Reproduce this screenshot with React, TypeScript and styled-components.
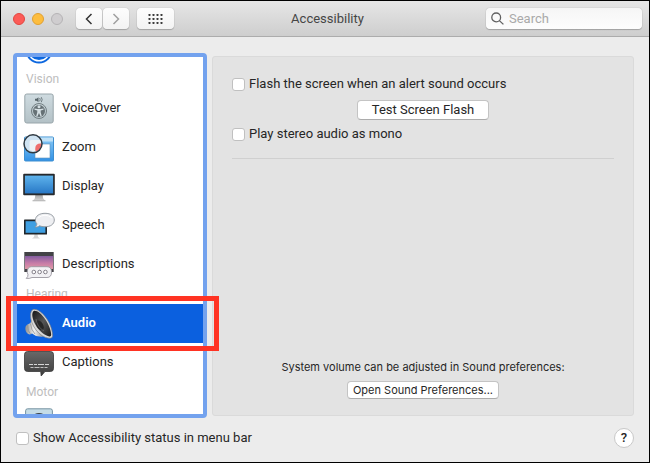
import React from "react";
import styled, { createGlobalStyle } from "styled-components";

const GlobalStyle = createGlobalStyle`
  *, *::before, *::after { box-sizing: border-box; }
  body { margin: 0; background: #000; }
  body, button, input { font-family: Roboto, "Liberation Sans", sans-serif; font-size: 13px; color: #262626; }
`;

const smallFont = 'Inter, "Liberation Sans", sans-serif';

const Window = styled.main`
  display: flex;
  flex-direction: column;
  height: 100vh;
  border: 1px solid #000;
  background: #ececec;
`;

const Toolbar = styled.header`
  display: grid;
  grid-template-columns: 1fr auto 1fr;
  align-items: center;
  height: 36px;
  flex: none;
  padding: 0 7px 0 12px;
  background: linear-gradient(#e6e6e6, #cecece);
  border-bottom: 1px solid #acacac;
`;

const ToolbarStart = styled.div`
  display: flex;
  align-items: center;
  gap: 8px;
`;

const Lights = styled.div`
  display: flex;
  gap: 7px;
  margin-right: 5px;
`;

const Light = styled.button<{ $fill: string; $edge: string }>`
  width: 12px;
  height: 12px;
  padding: 0;
  border-radius: 50%;
  border: 1px solid ${(p) => p.$edge};
  background: ${(p) => p.$fill};
`;

const NavGroup = styled.nav`
  display: flex;
  gap: 1px;
`;

const ToolButton = styled.button<{ $wide?: boolean }>`
  display: flex;
  align-items: center;
  justify-content: center;
  width: ${(p) => (p.$wide ? 37 : 26)}px;
  height: 21px;
  padding: 0;
  border: 0;
  border-radius: 4px;
  background: linear-gradient(#fdfdfd, #f3f3f3);
  box-shadow: 0 0 1px rgba(0, 0, 0, 0.3), 0 1px 1px rgba(0, 0, 0, 0.2);
`;

const Title = styled.h1`
  margin: 0;
  font-size: 13px;
  font-weight: 400;
  line-height: 16px;
  color: #454545;
`;

const SearchBox = styled.label`
  display: flex;
  align-items: center;
  justify-self: end;
  gap: 5px;
  width: 156px;
  height: 21px;
  padding: 0 5px;
  border-radius: 4px;
  background: linear-gradient(#f6f6f6, #fdfdfd);
  box-shadow: 0 0 1px rgba(0, 0, 0, 0.35), 0 1px 1px rgba(0, 0, 0, 0.2);

  input {
    flex: 1;
    min-width: 0;
    padding: 0;
    border: 0;
    outline: 0;
    background: none;
    line-height: 16px;
  }
  input::placeholder { color: #a9a9a9; opacity: 1; }
`;

const Body = styled.div`
  display: flex;
  flex: 1;
  min-height: 0;
  gap: 5px;
  padding: 16px 15px 0 12px;
`;

const Sidebar = styled.aside`
  position: relative;
  display: flex;
  flex: none;
  width: 194px;
  border: 4px solid #73a2ee;
  border-radius: 4px;
  background: #fff;
`;

const ListView = styled.div`
  flex: 1;
  overflow: hidden;
`;

const List = styled.ul`
  margin: -27px 0 0;
  padding: 0;
  list-style: none;
`;

const GroupLabel = styled.li`
  height: 20px;
  padding-left: 9px;
  font-size: 12px;
  line-height: 20px;
  color: #bdbdbd;
`;

const Row = styled.button<{ $selected?: boolean }>`
  display: flex;
  align-items: center;
  gap: 7px;
  width: 100%;
  height: 39px;
  padding: 0 6px 1px;
  border: 0;
  text-align: left;
  line-height: 16px;
  font-weight: ${(p) => (p.$selected ? 600 : 400)};
  color: ${(p) => (p.$selected ? "#fff" : "#262626")};
  background: ${(p) => (p.$selected ? "#0b60df" : "transparent")};

  svg { flex: none; }
`;

const Highlight = styled.div`
  position: absolute;
  top: 239px;
  left: -11px;
  right: -16px;
  height: 55px;
  border: 5px solid #ff3323;
  pointer-events: none;
`;

const Panel = styled.section`
  display: flex;
  flex-direction: column;
  flex: 1;
  min-width: 0;
  margin: 3px 0 2px;
  padding: 19px 19px 16px;
  border: 1px solid #dadada;
  border-radius: 3px;
  background: #e3e3e3;
`;

const CheckLabel = styled.label`
  display: flex;
  align-items: center;
  gap: 4px;
  line-height: 16px;

  input {
    appearance: none;
    width: 13px;
    height: 13px;
    margin: 0;
    border: 1px solid #c0c0c0;
    border-radius: 3px;
    background: #fff;
  }
`;

const PushButton = styled.button<{ $small?: boolean }>`
  align-self: center;
  height: ${(p) => (p.$small ? 18 : 20)}px;
  padding: 0 ${(p) => (p.$small ? 5 : 14)}px;
  margin: ${(p) => (p.$small ? "6px 0 0" : "8px 0 6px")};
  border: 1px solid #c4c4c4;
  border-bottom-color: #acacac;
  border-radius: 4px;
  background: #fff;
  ${(p) => p.$small && `font-family: ${smallFont};`}
  font-size: ${(p) => (p.$small ? 11 : 13)}px;
  line-height: 16px;
`;

const Divider = styled.hr`
  width: 100%;
  margin: 16px 0 0;
  border: 0;
  border-top: 1px solid #d0d0d0;
`;

const Note = styled.p`
  margin: auto 0 0;
  text-align: center;
  font-family: ${smallFont};
  font-size: 11px;
  line-height: 16px;
`;

const Footer = styled.footer`
  display: flex;
  align-items: center;
  justify-content: space-between;
  flex: none;
  height: 44px;
  padding: 0 15px 4px;
`;

const HelpButton = styled.button`
  width: 20px;
  height: 20px;
  padding: 0;
  border: 1px solid #c8c8c8;
  border-radius: 50%;
  background: #fff;
  font-weight: 500;
  line-height: 16px;
`;

const Figure = ({ color }: { color: string }) => (
  <g fill={color}>
    <circle cx="16" cy="13.4" r="1.5" />
    <path d="M11.5 15.2 L14.6 15.8 H17.4 L20.5 15.2 V16.4 L17.7 17.2 V19 L18.8 23 L17.6 23.3 L16 19.6 L14.4 23.3 L13.2 23 L14.3 19 V17.2 L11.5 16.4 Z" />
  </g>
);

const OverviewIcon = () => (
  <svg width="32" height="32" viewBox="0 0 32 32">
    <circle cx="16" cy="17" r="13.5" fill="#0c67df" />
    <circle cx="16" cy="17" r="10.8" fill="none" stroke="#fff" strokeWidth="1.4" />
    <Figure color="#fff" />
  </svg>
);

const VoiceOverIcon = () => (
  <svg width="32" height="32" viewBox="0 0 32 32">
    <defs>
      <linearGradient id="plate" x2="0" y2="1">
        <stop stopColor="#cfdbe0" />
        <stop offset="1" stopColor="#b3c1c6" />
      </linearGradient>
    </defs>
    <rect x="1.8" y="2" width="28.4" height="29" rx="2" fill="url(#plate)" stroke="#98a5aa" />
    <path d="M12 6.7 h1.5 l2-1.5 v5 l-2-1.5 H12z" fill="#59666b" />
    <path d="M16.7 6 q1 1.7 0 3.4 M18.3 5.2 q1.7 2.5 0 5" fill="none" stroke="#59666b" strokeWidth=".8" />
    <circle cx="16" cy="19" r="7.5" fill="none" stroke="#717d81" strokeWidth="1" />
    <circle cx="16" cy="19" r="6" fill="#667175" />
    <g transform="translate(0 1.3)"><Figure color="#d5dfe3" /></g>
  </svg>
);

const ZoomIcon = () => (
  <svg width="32" height="32" viewBox="0 0 32 32">
    <defs>
      <linearGradient id="zoomBlue" x2="0" y2="1">
        <stop stopColor="#8bcaf5" />
        <stop offset="1" stopColor="#3292e6" />
      </linearGradient>
    </defs>
    <rect x="1.5" y="6" width="29" height="24" rx="1" fill="url(#zoomBlue)" stroke="#3f8fd0" />
    <rect x="2" y="6.5" width="28" height="4" fill="#c0e1f7" />
    <rect x="12" y="13" width="15" height="14" fill="#fff" stroke="#5f8fb8" strokeWidth=".6" />
    <circle cx="10" cy="12.8" r="8.8" fill="#cfe3f2" />
    <path d="M6.5 18.5 V11 Q6.5 9 8.5 9 H18 Q18.8 15 14 19.5 Q10 21.5 6.5 18.5Z" fill="#edf2f5" />
    <path d="M18.5 12.5 Q12.5 12 12.3 17 Q11.8 20 13 20.8 Q18.5 18.5 18.5 12.5Z" fill="#ef6d6b" />
    <circle cx="10" cy="12.8" r="9" fill="none" stroke="#303a42" strokeWidth="1.5" />
  </svg>
);

const DisplayIcon = () => (
  <svg width="32" height="32" viewBox="0 0 32 32">
    <defs>
      <linearGradient id="screen" x2="0" y2="1">
        <stop stopColor="#5eb3ec" />
        <stop offset="1" stopColor="#2878c6" />
      </linearGradient>
      <linearGradient id="stand" x2="0" y2="1">
        <stop stopColor="#9b9b9b" />
        <stop offset="1" stopColor="#dadada" />
      </linearGradient>
    </defs>
    <path d="M12.5 24 H19.5 L20.2 28.5 L22.5 31 H9.5 L11.8 28.5Z" fill="url(#stand)" />
    <path d="M9.5 30.8 H22.5" stroke="#aaa" strokeWidth=".8" />
    <rect x="0.2" y="3.8" width="31.6" height="21.4" rx="1" fill="#26292c" />
    <rect x="1.9" y="5.6" width="28.2" height="17.8" fill="url(#screen)" />
  </svg>
);

const SpeechIcon = () => (
  <svg width="32" height="32" viewBox="0 0 32 32">
    <path d="M11.5 25 h3 l.5 3 2 1.6 h-8 l2-1.6z" fill="#d6d6d6" />
    <rect x="1" y="10.6" width="23" height="15" rx=".7" fill="#20262b" />
    <rect x="2.6" y="12.2" width="19.8" height="11.6" fill="#3f9fe2" />
    <path d="M22 4.3 C28 4.3 31.3 7 31.3 11 C31.3 15.2 27.5 17.8 22 17.8 C19.8 17.8 18 17.4 16.6 16.8 C15.5 17.7 14 18.2 12.2 18.1 C13.4 17 13.9 15.8 13.8 14.7 C12.8 13.6 12.4 12.4 12.4 11 C12.4 7 16.5 4.3 22 4.3Z" fill="#eeeff2" stroke="#8d949b" strokeWidth=".9" />
    <path d="M15 9 Q22 3.5 29 9" fill="none" stroke="#fff" />
  </svg>
);

const DescriptionsIcon = () => (
  <svg width="32" height="32" viewBox="0 0 32 32">
    <defs>
      <linearGradient id="sunset" x2="0" y2="1">
        <stop stopColor="#835d9f" />
        <stop offset=".55" stopColor="#c77ba7" />
        <stop offset="1" stopColor="#e09aa5" />
      </linearGradient>
    </defs>
    <rect x="1.3" y="4" width="29.4" height="20" fill="#424246" />
    <rect x="2" y="8" width="28" height="13" fill="url(#sunset)" />
    <path d="M8.5 18.7 H24 Q28.5 18.7 28.5 24 Q28.5 29.5 24 29.5 H9 Q6.5 30.8 3.2 30.4 Q5.2 29 5 26.5 Q4 25 4.3 23 Q4.8 18.7 8.5 18.7Z" fill="#f2f1f4" stroke="#9a969f" strokeWidth=".9" />
    <g fill="#fff" stroke="#77737d" strokeWidth=".9">
      <circle cx="10.8" cy="24" r="1.8" />
      <circle cx="16.6" cy="24" r="1.8" />
      <circle cx="22.4" cy="24" r="1.8" />
    </g>
  </svg>
);

const AudioIcon = () => (
  <svg width="32" height="32" viewBox="0 0 32 32">
    <defs>
      <linearGradient id="metal">
        <stop stopColor="#8f8f8f" />
        <stop offset=".5" stopColor="#f0f0f0" />
        <stop offset="1" stopColor="#929292" />
      </linearGradient>
      <linearGradient id="cone" x2="1" y2="1">
        <stop stopColor="#151515" />
        <stop offset=".5" stopColor="#565656" />
        <stop offset="1" stopColor="#1b1b1b" />
      </linearGradient>
    </defs>
    <path d="M8.5 13 L7.5 16 L4.5 17.5 Q1.8 19 2.4 22.8 Q3.2 27 6.8 27.5 L9 26.5 L13 29 L20 30Z" fill="url(#metal)" />
    <path d="M4.7 18 Q4.2 24 7.7 27.3 M7.5 16.5 Q8 23 12 27" fill="none" stroke="#888" strokeWidth=".7" />
    <path d="M10 2.5 C17 .8 29 15 29.6 28 Q29.8 31.8 26 31.2 C17 30.5 6.5 18 7.6 6.7 Q8 3.2 10 2.5Z" fill="#d8d8d8" stroke="#777" strokeWidth=".6" />
    <path d="M11.2 3.8 C17.5 3.2 27.8 17.5 28.2 27.5 Q28.2 30 25.6 29.2 C18 27.5 8.8 15.5 9.3 7 Q9.5 4.2 11.2 3.8Z" fill="url(#cone)" />
    <ellipse cx="16.8" cy="18.3" rx="3.2" ry="5.5" transform="rotate(-33 16.8 18.3)" fill="#262626" />
    <path d="M13 12 Q14 20 21 24" fill="none" stroke="#777" strokeWidth=".6" />
  </svg>
);

const CaptionsIcon = () => (
  <svg width="32" height="32" viewBox="0 0 32 32">
    <defs>
      <linearGradient id="bubble" x2="0" y2="1">
        <stop stopColor="#686868" />
        <stop offset="1" stopColor="#3d3d3d" />
      </linearGradient>
    </defs>
    <path d="M4.5 5.5 H27.5 Q30.5 5.5 30.5 8.5 V22.5 Q30.5 25.5 27.5 25.5 H22 L18.2 30 L17.7 25.5 H4.5 Q1.5 25.5 1.5 22.5 V8.5 Q1.5 5.5 4.5 5.5Z" fill="url(#bubble)" stroke="#383838" strokeWidth=".8" />
    <path d="M6 18.5 H26" stroke="#d6d6d6" strokeWidth="1.2" strokeDasharray="4 1 3 1 6 1" />
    <path d="M7.5 21.5 H24.5" stroke="#c2c2c2" strokeWidth="1.2" strokeDasharray="3 1 5 1" />
  </svg>
);

const SwitchControlIcon = () => (
  <svg width="32" height="32" viewBox="0 0 32 32">
    <rect x="2.6" y="3.8" width="26.8" height="28" rx="2" fill="#c5dce6" stroke="#7693a1" />
    <circle cx="16" cy="17" r="9" fill="#3a4247" />
    <circle cx="16" cy="18" r="6.5" fill="#8ba1ab" />
  </svg>
);

type Entry =
  | { group: string }
  | { name: string; icon: React.FC; selected?: boolean; iconOnly?: boolean };

const entries: Entry[] = [
  { name: "Overview", icon: OverviewIcon, iconOnly: true },
  { group: "Vision" },
  { name: "VoiceOver", icon: VoiceOverIcon },
  { name: "Zoom", icon: ZoomIcon },
  { name: "Display", icon: DisplayIcon },
  { name: "Speech", icon: SpeechIcon },
  { name: "Descriptions", icon: DescriptionsIcon },
  { group: "Hearing" },
  { name: "Audio", icon: AudioIcon, selected: true },
  { name: "Captions", icon: CaptionsIcon },
  { group: "Motor" },
  { name: "Switch Control", icon: SwitchControlIcon, iconOnly: true },
];

const Chevron = ({ back }: { back?: boolean }) => (
  <svg width="8" height="12" viewBox="0 0 8 12" fill="none" stroke={back ? "#333" : "#a0a0a0"} strokeWidth="1.5">
    <path d={back ? "M6.5 1 L1.5 6 L6.5 11" : "M1.5 1 L6.5 6 L1.5 11"} />
  </svg>
);

const GridDots = () => (
  <svg width="15" height="12" viewBox="0 0 15 12" fill="#3c3c3c">
    {[0, 1, 2].flatMap((r) =>
      [0, 1, 2, 3].map((c) => <rect key={`${r}-${c}`} x={c * 4 + 0.5} y={r * 4 + 1} width="2" height="2" rx=".4" />),
    )}
  </svg>
);

const Magnifier = () => (
  <svg width="13" height="13" viewBox="0 0 13 13" fill="none" stroke="#606060" strokeWidth="1.3">
    <circle cx="5.2" cy="5.4" r="4.4" />
    <path d="M8.4 8.6 L12.4 12.4" />
  </svg>
);

export default function App() {
  return (
    <>
      <GlobalStyle />
      <Window>
        <Toolbar>
          <ToolbarStart>
            <Lights>
              <Light aria-label="Close" $fill="#fc5b57" $edge="#e24640" />
              <Light aria-label="Minimize" $fill="#fdbd3e" $edge="#e0a032" />
              <Light aria-label="Full screen" $fill="#cfcdcf" $edge="#b5b3b5" />
            </Lights>
            <NavGroup aria-label="History">
              <ToolButton aria-label="Back"><Chevron back /></ToolButton>
              <ToolButton aria-label="Forward"><Chevron /></ToolButton>
            </NavGroup>
            <ToolButton $wide aria-label="Show all"><GridDots /></ToolButton>
          </ToolbarStart>
          <Title>Accessibility</Title>
          <SearchBox>
            <Magnifier />
            <input type="search" placeholder="Search" aria-label="Search" />
          </SearchBox>
        </Toolbar>
        <Body>
          <Sidebar>
            <ListView>
              <List>
                {entries.map((e, i) =>
                  "group" in e ? (
                    <GroupLabel key={i}>{e.group}</GroupLabel>
                  ) : (
                    <li key={i}>
                      <Row $selected={e.selected} aria-label={e.name}>
                        <e.icon />
                        {!e.iconOnly && e.name}
                      </Row>
                    </li>
                  ),
                )}
              </List>
            </ListView>
            <Highlight />
          </Sidebar>
          <Panel>
            <CheckLabel>
              <input type="checkbox" />
              Flash the screen when an alert sound occurs
            </CheckLabel>
            <PushButton>Test Screen Flash</PushButton>
            <CheckLabel>
              <input type="checkbox" />
              Play stereo audio as mono
            </CheckLabel>
            <Divider />
            <Note>System volume can be adjusted in Sound preferences:</Note>
            <PushButton $small>Open Sound Preferences...</PushButton>
          </Panel>
        </Body>
        <Footer>
          <CheckLabel>
            <input type="checkbox" />
            Show Accessibility status in menu bar
          </CheckLabel>
          <HelpButton aria-label="Help">?</HelpButton>
        </Footer>
      </Window>
    </>
  );
}
